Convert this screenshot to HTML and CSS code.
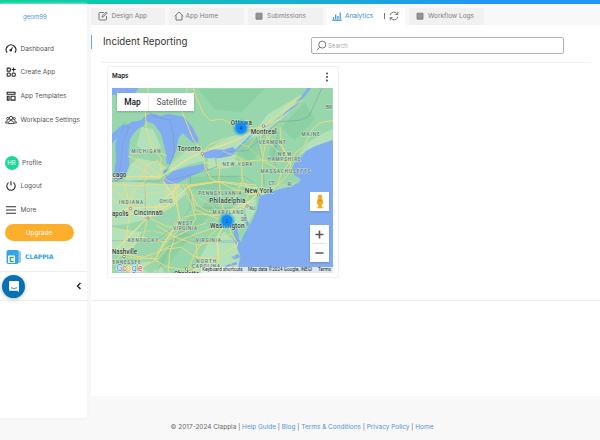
FILE: index.html
```html
<!DOCTYPE html>
<html lang="en">
<head>
<meta charset="utf-8">
<title>Incident Reporting</title>
<link rel="stylesheet" href="styles.css">
</head>
<body>
<div class="topbar"></div>
<div class="shell">
  <aside class="sidebar">
    <div class="workspace">geom99</div>
    <nav class="nav">
      <a class="item"><svg class="ico" viewBox="0 0 14 14"><path d="M2.5 11.3A5.6 5.6 0 1 1 11.5 11.3M6.5 8.5 9 5.2"/><circle cx="6.7" cy="8.4" r=".9"/></svg>Dashboard</a>
      <a class="item"><svg class="ico" viewBox="0 0 14 14"><rect x="2.5" y="2.5" width="3.7" height="3.7" rx=".8"/><rect x="2.5" y="8.2" width="3.7" height="3.7" rx="1.2"/><rect x="8.3" y="8.2" width="3.7" height="3.7" rx="1.2"/><path d="M10.1 1.8v4.7M7.8 4.1h4.7"/></svg>Create App</a>
      <a class="item"><svg class="ico" viewBox="0 0 14 14"><path d="M2.5 2.7h9.2v2.2H2.5zM2.7 7.3h2v4.5h-2zM7 7.3h4.7v4.5H7z"/></svg>App Templates</a>
      <a class="item"><svg class="ico people" viewBox="0 0 14 14"><circle cx="7" cy="4.8" r="2"/><circle cx="3.2" cy="5.3" r="1.3"/><circle cx="10.8" cy="5.3" r="1.3"/><path d="M3.8 11.2C3.800 6.5 10.2 6.5 10.2 11.2zM3.5 8C1.3 7.8.7 9 .7 10.500h2.800M10.5 8c2.200-.2 2.800 1 2.800 2.500h-2.800"/></svg>Workplace Settings</a>
    </nav>
    <nav class="nav account">
      <a class="item profile"><span class="avatar">HR</span>Profile</a>
      <a class="item"><svg class="ico" viewBox="0 0 14 14"><path d="M7 1.5v5M4.2 3A4.9 4.9 0 1 0 9.8 3"/></svg>Logout</a>
      <a class="item"><svg class="ico thin" viewBox="0 0 14 14"><path d="M1.2 3.2h11.700M1.2 7h11.700M1.2 10.8h11.700"/></svg>More</a>
    </nav>
    <button class="upgrade">Upgrade</button>
    <div class="brand">
      <svg width="16" height="16" viewBox="0 0 16 16"><rect x="4" y="1.500" width="11" height="12.500" rx="2" fill="#8bcdf0"/><rect x=".5" y="1" width="12" height="14" rx="2" fill="#35a6e0"/><rect x="2" y="6.500" width="7" height="7.500" rx="1" fill="#fff"/><path d="M7.800 8.500H4.300v3.800h3.500" fill="none" stroke="#3aa66b" stroke-width="1.300"/></svg>
      <span>CLAPPIA</span>
    </div>
    <div class="collapse">
      <span class="chat"><svg width="12" height="13" viewBox="0 0 12 13"><path d="M2.200 1h7.600q1.200 0 1.200 1.200V12l-2-1.300H2.200Q1 10.700 1 9.500V2.200Q1 1 2.200 1z" fill="#fff"/><path d="M3 7.700q3 1.700 6 0" fill="none" stroke="#0871b4" stroke-width=".8"/></svg></span>
      <svg width="6" height="8" viewBox="0 0 6 8"><path d="M4.500 1 1.500 4l3 3" fill="none" stroke="#222" stroke-width="1.400"/></svg>
    </div>
  </aside>
  <main class="main">
    <div class="tabs">
      <div class="tab t1"><svg width="10" height="10" viewBox="0 0 10 10"><path d="M6 1.500H1.800Q1 1.500 1 2.300v5.900q0 .8.8.8h5.900q.8 0 .8-.8V5M4 6.200 4.200 5 8.200 1l1 1-4 4z"/></svg>Design App</div>
      <div class="tab t2"><svg width="10" height="10" viewBox="0 0 10 10"><path d="M.7 5.200 5 1l4.300 4.200M2 4.300V9h6V4.300"/></svg>App Home</div>
      <div class="tab t3"><svg width="8" height="8" viewBox="0 0 8 8"><path class="solid" d="M1 1.200h6v6H1z"/><path class="cut" d="M1.500 3h5M1.500 5h5"/></svg>Submissions</div>
      <div class="tab t4"><svg width="10" height="10" viewBox="0 0 10 10"><path class="bars" d="M1.500 8V6M3.700 8V3.500M5.900 8V5M8.200 8V1.500M.3 9.200h9.400"/></svg><span>Analytics</span><i></i><svg class="refresh" width="10" height="10" viewBox="0 0 10 10"><path d="M1.200 4.300A3.900 3.900 0 0 1 8.500 3.200M8.800.8v2.700H6.300M8.800 5.700A3.900 3.900 0 0 1 1.500 6.800M1.200 9.200V6.500h2.500"/></svg></div>
      <div class="tab t5"><svg width="8" height="8" viewBox="0 0 8 8"><path class="solid" d="M1 1.200h6v6H1z"/><path class="cut" d="M1.500 3h5M1.500 5h5"/></svg>Workflow Logs</div>
    </div>
    <header class="head">
      <h1>Incident Reporting</h1>
      <div class="search"><svg width="11" height="11" viewBox="0 0 11 11"><circle cx="6.300" cy="4.600" r="3.500"/><path d="M3.800 7.100 1 9.800"/></svg>Search</div>
    </header>
    <section class="board">
      <div class="card">
        <div class="card-head"><b>Maps</b><svg width="4" height="10" viewBox="0 0 4 10"><circle cx="2" cy="1.500" r=".9"/><circle cx="2" cy="5" r=".9"/><circle cx="2" cy="8.500" r=".9"/></svg></div>
        <div class="map">
          <svg class="geo" width="221" height="185" viewBox="112 88 221 185">
            <g transform="translate(108 84) scale(.33333)">
              <rect x="12" y="12" width="664" height="556" fill="#98d6ab"/>
              <g fill="#bde5bf" opacity=".75">
                <path d="M12 295L60 290 160 300 215 303 235 330 190 370 120 405 60 420 12 425z"/>
                <path d="M65 245L90 222 150 235 176 250 155 285 50 290zM100 130l35 5 25 55-40 15-35-20z"/>
                <path d="M180 250l60-55 40-10 10 45-50 12-50 22zM270 210l90-50 60-15 20 10-60 42-80 5z"/>
                <path d="M300 225l90-12 30 15-60 25-62 3zM12 430l90 15-30 55-60 10z"/>
                <path d="M250 568l50-90 50-35 35 35 12 60-3 30zM60 568l30-30 60-10 20 40zM350 385l50-30 45-10-5 40-25 40-30-5z"/>
                <path d="M430 155l50-65 70-40 30-20-40 60-60 45-40 30zM570 215l30-40 50-30 26-10v30z"/>
              </g>
              <g fill="#7fcd9a" opacity=".45">
                <path d="M190 470l40-55 50-50 40-30 15 20-50 60-50 60-50 60-60 33-20-15 50-45zM235 280l150-5 30 20-60 25-100-5zM400 190l20-25 25-10 5 60-40 30-30-20zM480 230l10-55 25-20 10 45-10 35zM270 15l200 0-70 70-80-10zM520 130l70-75 30 50-60 65z"/>
              </g>
              <g fill="#82acf2">
                <path d="M12 12h80l-10 14-70 8z"/>
                <path d="M12 150l33-30 8-2-12 24-29 38z"/>
                <path d="M24 230l-2-50 8-30 18-23 24-14 28-4 10-12 8 4-12 25-16 8-14 16-10 15-4 35 2 42-14 38-22 10-14-6z"/>
                <path d="M118 92l20-3 20 6 26-5 44 8 25 31 18 36-2 14-16-4-29-28-13 16-4 28-11 30-10 18-10 2-4-42-14-52-20-26-28-12z"/>
                <path d="M162 290l33-28 40-12 55-11 6 13-51 27-35 18-32 8zM161 262l14-6 4 8-9 6z"/>
                <path d="M277 206l24-10 44 1 29-8 11 9-14 17-32 7-54-1z"/>
                <path d="M676 168l-26 8-25 9-30 15-20 24-15 12-8 20 8 18 18 12-6 12-32 8-40 14-40 14-8 12-5 30-12 29-15 26-15 25-7 24-12 10 12 26-5 20-5 32h288z"/>
                <path d="M376 423l10 6 5 20 2 16 12 18-9 9-12-12-6-26zM408 388l5 5 3 15 8 13-6 8-8-17zM500 165l4 0 3 28-3 2z"/>
                <path d="M598 12h12l-20 25-24 26-4-2 17-22zM562 61l4 2-42 33-3-3zM383 196l43-42 4 2-42 43z"/>
                <path d="M370 520l18-10 10 9-20 8zM350 545l35-12 3 8-28 8z"/>
              </g>
              <path d="M523 94l-25 20-36 19-34 22" fill="none" stroke="#82acf2" stroke-width="2.500"/>
              <path d="M448 331l20-17 50-13 50-8-12 12-55 14-30 12z" fill="#a8dbb1"/>
              <g fill="none" stroke="#708ca5" stroke-width="1.300">
                <path d="M53 12l12 17 18 11 13 18 21 15 17 23 50 12 12 42 3 55-15 40-16 24 20 20 80-22 58-18-3-25 40-22 55-2 95-87 60-4 30-12 18-40 24-52 24-6 20 17"/>
                <path d="M12 470h180l42-20 50 25h105M112 295v110l-12 20M12 292h150M247 277v95l-35 50-65 45M250 372h158l13 53M298 252v25h110l30 20M444 157l20 80 5 68M510 145l-15 75 10 30M462 262h82M145 568l50-96 195-2M40 145l10-18 14 2-18 45-6 50-8 60" stroke-dasharray="5 2"/>
              </g>
              <g fill="none" stroke="#fff4b8" stroke-width="4" opacity=".5">
                <path d="M12 280q70-5 145-1l85-56 43-18 95-35 60-30M12 390l55-18 110-5 65-60 90-14 110 18 26 22M60 385l60 15 65-70 30-27M205 305l-20 55-65 40-55 55-50 50M165 290l40 60 10 60-45 65-30 55M450 330l-40 35-58 50-25 45 5 65-95 43"/>
              </g>
              <g fill="none" stroke="#f5db77" stroke-width="2.700" stroke-linejoin="round">
                <path d="M12 280q70-5 145-1l85-56 43-18 55-22 40-12 35-19 42-16M12 300l65 5 80-4 85 2 90-11 110 11 10 22M12 390l55-18 110-5 65-60 90-14 52 25 63 12"/>
                <path d="M60 385l60 15 65-70 30-27M205 305l-20 55-65 40-55 55-50 50M165 290l40 60 10 60-45 65-30 55-75 38M450 330l-40 35-58 50-25 45 5 65-95 43"/>
                <path d="M150 285l-50-30-32-17M155 278l-35-37-60-25M155 278l5-55-25-27-20-60-3-50 10-30-2-44M135 196l-20 10-50 2M135 196l42 20M165 265l-15-35-30 11-25 44M65 371l5-40 30-28 20-25M67 370l-10-40-10-35M67 370l-30-40-25-15M67 370l-10 75-10 60-35 35M120 400l-15 60-58 45M120 400l55 27 60 10 60-20M48 510l60 10 50-20 60-30 45-20 60-20"/>
                <path d="M285 205l-30-40-22-55-12-30 12-35 4-33M285 205l18-22 50-22M285 205l6 45 15 32 28 15 5 48 13 60M292 235l45 10 70-13 55-4 65 5 17-4M337 245l-5 45M400 225l3 65 34 40M403 290l-30 70M462 130l-5 45 8 55-5 100M462 130l30 55 40 40 17 18M462 130l55-25 20-40 44-30M462 130l-60 5-60-30-35 5-20-20-24-55-7-23M462 130l55-45 67-38M549 230l12-22 26-20 26-52 25-20 38-7M549 230l-30 38-10 35-57 25M549 230l-5 38-35 35M462 230l10-45 25-55M462 230l40 20 20 18 25-8M503 165l18 25 27 40M549 230l-28-45-5-55"/>
                <path d="M410 362l10-30 30-2M410 362l-50 18-60 3-33-20-28-58M352 413l-50-20-40-15-18-75M352 413l-45 40-42 45-30 70M352 413l18 35 20 30M330 525l-70-7-40-28-45 5-25 30-90-5-48-15M330 525l28-25 32-20M370 448l-35 20-70 15-65-25-55-35M265 483l5 60-35 15-60-10-50-30M225 303l25 55 13 45-20 35-43 20-15 50-5 60M210 303l-10 60-60 35M330 395l-60-5-45 10-15 40-35 35-70-15-38 5"/>
                <path d="M12 430l65 18 55-8 68 18M12 560l60-15 35-27M332 525l12 43M380 170l45 22 37 38M245 222l-15 22M180 255l40-50 65-1M403 225l-60-24M420 190l42-60M345 410l-30-45-62-35M165 283l50 22M390 475l-13 50-20 43M150 500l30-40 25-50M12 345l55 25 50-40 60-8M78 305l-5 65M112 300l8 100M180 300l-12 68" stroke-width="1.700"/>
              </g>
            </g>
            <g fill="#fff" stroke="#555" stroke-width=".6"><circle cx="202.500" cy="153.500" r="1.200"/><circle cx="263.500" cy="126" r="1.200"/><circle cx="116" cy="179.500" r="1.200"/><circle cx="130.500" cy="208.500" r="1.200"/><circle cx="148" cy="218" r="1.200"/><circle cx="258.500" cy="195" r="1.200"/><circle cx="247" cy="206" r="1.200"/><circle cx="124" cy="256.500" r="1.200"/><circle cx="186.500" cy="269" r="1.200"/></g>
            <g class="state">
              <text x="146" y="153.200" textLength="29">MICHIGAN</text><text x="310.500" y="135.500" textLength="18">MAINE</text><text x="329" y="109">BR</text><text x="272.300" y="144.200" textLength="27">VERMONT</text><text x="284.500" y="156.300" textLength="13">NEW</text><text x="284" y="161.300" textLength="33">HAMPSHIRE</text><text x="285.500" y="172.800" textLength="50">MASSACHUSETTS</text><text x="237.500" y="166" textLength="30">NEW YORK</text><text x="271.500" y="185">CT</text><text x="289.500" y="185.700">RI</text><text x="220" y="195.200" textLength="43">PENNSYLVANIA</text><text x="131" y="204" textLength="24">INDIANA</text><text x="166" y="202.700" textLength="13">OHIO</text><text x="185" y="224.700" textLength="15">WEST</text><text x="185" y="229.700" textLength="24">VIRGINIA</text><text x="143" y="241.800" textLength="30">KENTUCKY</text><text x="208.300" y="241.800" textLength="25">VIRGINIA</text><text x="228" y="213.500" textLength="31">MARYLAND</text><text x="252.300" y="210">NJ</text><text x="244" y="220.700">DE</text><text x="112.500" y="264" class="start" textLength="28">ENNESSEE</text><text x="206.300" y="263.200" textLength="20">NORTH</text><text x="206" y="268.300" textLength="28">CAROLINA</text>
            </g>
            <g class="city">
              <text x="189" y="151" textLength="23">Toronto</text><text x="263.700" y="133.700" textLength="26">Montreal</text><text x="241.300" y="124.500" textLength="21">Ottawa</text><text x="112.500" y="176.500" class="start">cago</text><text x="112" y="215.500" class="start" textLength="16.500">apolis</text><text x="148.200" y="214.700" textLength="29">Cincinnati</text><text x="258.800" y="192.700" textLength="28">New York</text><text x="227.300" y="203.300" textLength="36">Philadelphia</text><text x="227.200" y="228" textLength="34.500">Washington</text><text x="112" y="254" class="start" textLength="25">Nashville</text><text x="186.500" y="275.500" textLength="25">Charlotte</text>
            </g>
            <g class="cluster"><circle cx="241" cy="128" r="8.500" opacity=".2"/><circle cx="241" cy="128" r="7" opacity=".35"/><circle cx="241" cy="128" r="5.500"/><text x="241" y="130">4</text><circle cx="227" cy="220.500" r="8.500" opacity=".2"/><circle cx="227" cy="220.500" r="7" opacity=".35"/><circle cx="227" cy="220.500" r="5.500"/><text x="227" y="222.500">2</text></g>
            <text class="google" x="116.500" y="270.700" textLength="26"><tspan fill="#4285f4">G</tspan><tspan fill="#ea4335">o</tspan><tspan fill="#fbbc04">o</tspan><tspan fill="#4285f4">g</tspan><tspan fill="#34a853">l</tspan><tspan fill="#ea4335">e</tspan></text>
          </svg>
          <div class="maptype"><b>Map</b><span>Satellite</span></div>
          <div class="controls">
            <div class="pegman"><svg width="10" height="15" viewBox="0 0 10 15"><ellipse cx="5" cy="13.500" rx="3.500" ry="1" fill="#f5c778"/><path d="M2.200 5.500Q5 4 7.800 5.500l.5 4-1 .5L6.500 14h-3L2.700 10l-1-.5z" fill="#f2ab24"/><circle cx="5" cy="3" r="2.400" fill="#f4ae25"/><path d="M3.600 5.700 5 7l1.400-1.300" fill="#b87319"/></svg></div>
            <div class="zoom"><svg width="19" height="37" viewBox="0 0 19 37"><path d="M5.500 9.500h8M9.500 5.500v8M5.500 28h8" stroke="#555" stroke-width="1.600"/><path d="M3 18.500h13" stroke="#e3e3e3"/></svg></div>
          </div>
          <div class="legal"><span class="l1">Keyboard shortcuts</span><span class="l2">Map data ©2024 Google, INEGI</span><span class="l3">Terms</span></div>
        </div>
      </div>
    </section>
  </main>
</div>
<footer class="footer">© 2017-2024 Clappia | <a>Help Guide</a> | <a>Blog</a> | <a>Terms &amp; Conditions</a> | <a>Privacy Policy</a> | <a>Home</a></footer>
</body>
</html>
```
FILE: styles.css
```css
* { box-sizing: border-box; }
body { margin: 0; width: 600px; height: 440px; overflow: hidden; background: #f8f8f8; font: 6.5px Inter, sans-serif; color: #555; }
.topbar { height: 4px; background: linear-gradient(90deg, #05d69a, #2196f3 80%); }
.shell { display: flex; gap: 4px; height: 414px; }
.sidebar { width: 87px; height: 414px; background: #fff; box-shadow: 0 0 3px #ececec; }
.workspace { height: 33px; padding: 9px 0 0 23px; color: #5793d6; font-size: 6.1px; }
.nav { display: grid; grid-auto-rows: 23.6px; }
.item { display: flex; align-items: center; gap: 4px; padding-left: 4.500px; font-size: 6.500px; white-space: nowrap; }
.ico { width: 12px; height: 12px; flex: none; fill: none; stroke: #222; stroke-width: 1.25; }
.thin { stroke-width: 1.100; }
.people { stroke-width: 1; }
.account { margin-top: 19.600px; }
.profile { gap: 3.500px; }
.avatar { width: 14px; height: 14px; border-radius: 50%; background: #1cd796; color: #fff; font-size: 6px; line-height: 14px; text-align: center; }
.upgrade { display: block; width: 69px; height: 17px; margin: 2.500px 0 0 4.500px; padding: 0; border: 0; border-radius: 9px; background: #fdaf2c; color: #fff; font: 6.500px Inter, sans-serif; }
.brand { display: flex; align-items: center; gap: 3px; height: 16px; margin: 7.500px 0 0 6px; color: #36a3df; font: bold 6.200px "DejaVu Sans", sans-serif; letter-spacing: -.15px; }
.collapse { display: flex; align-items: center; justify-content: space-between; height: 30px; margin-top: 6.500px; padding: 0 5px 0 2px; border-top: 1px solid #eee; border-bottom: 1px solid #eee; }
.chat { display: grid; place-items: center; width: 23px; height: 23px; border-radius: 50%; background: #0871b4; box-shadow: 0 1px 4px #bbb; }
.main { width: 509px; height: 392px; background: linear-gradient(#eee, #eee) 0 296px / 100% 1px no-repeat #fff; }
.tabs { display: flex; height: 21px; padding-top: 4px; background: #f8f8f8; gap: 4px; }
.tab { display: flex; align-items: center; height: 17px; background: #f1f1f1; color: #808080; font-size: 6.500px; white-space: nowrap; padding-bottom: 1px; }
.tab svg { flex: none; fill: none; stroke: #777; stroke-width: 1; }
.tab .solid { fill: #888; stroke: #888; }
.tab .cut { stroke: #bbb; stroke-width: .5; }
.tab .bars { stroke: #398bd8; stroke-width: 1.200; }
.t1 { width: 74px; padding-left: 7px; gap: 3.500px; }
.t2 { width: 75px; padding-left: 5px; gap: 1.500px; }
.t3 { width: 75px; padding-left: 7px; gap: 4px; }
.tab.t4 { width: 78px; padding-left: 5px; gap: 3px; background: #fff; color: #398bd8; }
.t4 span { width: 29px; }
.t4 i { width: 1px; height: 6px; margin-left: 7px; margin-right: 1px; background: #777; }
.t5 { width: 75px; padding-left: 7px; gap: 4px; }
.head { display: flex; height: 38px; margin: 0 9px 0 0; background: linear-gradient(#f1f1f1, #f1f1f1) 9px 37px / 100% 1px no-repeat; }
h1 { width: 202px; height: 14px; margin: 10px 0 0; padding-left: 11px; border-left: 1px solid #6aa6e8; font: 9.750px/13px Inter, sans-serif; color: #333; }
.search { display: flex; align-items: center; gap: 1.500px; width: 253px; height: 17px; margin: 12px 0 0 18px; padding-left: 3.500px; border: 1px solid #b3b3b3; border-radius: 2px; font-size: 6px; color: #aaa; }
.search svg { fill: none; stroke: #777; }
.board { padding: 3px 0 0 16px; }
.card { width: 232px; height: 212px; border: 1px solid #f0f0f0; border-radius: 2px; }
.card-head { display: flex; align-items: center; justify-content: space-between; height: 21px; padding: 0 9px 2px 4px; font-size: 6.200px; color: #222; }
.card-head b { font-weight: 600; padding-bottom: 3px; }
.card-head svg { fill: #333; }
.map { position: relative; width: 221px; height: 185px; margin-left: 4px; overflow: hidden; }
.geo { display: block; font-family: Roboto, sans-serif; }
.state text { font-size: 4.600px; font-weight: 500; text-anchor: middle; fill: #5b7069; stroke: #d5eddacc; stroke-width: .9px; paint-order: stroke; }
.city text { font-size: 6.300px; font-weight: 500; text-anchor: middle; fill: #2b3a35; stroke: #e3f4e3cc; stroke-width: .9px; paint-order: stroke; }
.city text.start, .state text.start { text-anchor: start; }
.cluster { fill: #118bf5; }
.cluster text { fill: #08396b; font-size: 5px; text-anchor: middle; }
.google { font-size: 8.600px; stroke: #fff; stroke-width: 1px; paint-order: stroke; }
.maptype { position: absolute; left: 5px; top: 5px; display: flex; width: 77px; height: 18px; background: #fff; font: 8.400px/18px Roboto, sans-serif; box-shadow: 0 1px 2px #0003; text-align: center; }
.maptype b { width: 32px; color: #111; font-weight: 500; border-right: 1px solid #eee; }
.maptype span { flex: 1; }
.controls { position: absolute; right: 4px; top: 104px; display: grid; gap: 14px; }
.pegman, .zoom { display: grid; place-items: center; width: 19px; background: #fff; box-shadow: 0 1px 2px #0003; }
.pegman { height: 19px; }
.zoom { height: 37px; }
.legal { position: absolute; right: 0; bottom: 0; display: flex; height: 6px; background: #eef2f0dd; color: #222; font: 4.650px/6px Roboto, sans-serif; white-space: nowrap; text-align: center; }
.l1 { width: 43px; }
.l2 { width: 72px; }
.l3 { width: 17px; }
.footer { padding-top: 4px; padding-left: 4px; text-align: center; font-size: 6.480px; line-height: 10px; color: #666; }
.footer a { color: #5793d6; }
```
